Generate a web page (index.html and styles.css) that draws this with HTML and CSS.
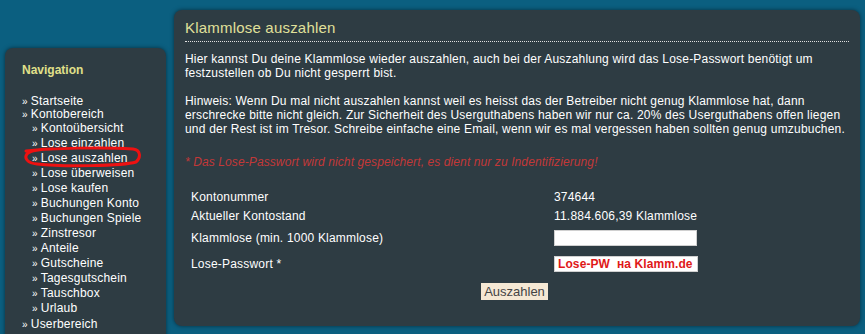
FILE: index.html
```html
<!DOCTYPE html>
<html lang="de">
<head>
  <meta charset="UTF-8" />
  <title>Klammlose auszahlen</title>
  <link rel="stylesheet" href="styles.css">
</head>
<body>
  <div class="page">
    <div class="sidebar">
      <div class="nav-box">
        <h3>Navigation</h3>
        <ul class="nav">
          <li>Startseite</li>
          <li>Kontobereich
            <ul class="subnav">
              <li>Kontoübersicht</li>
              <li>Lose einzahlen</li>
              <li class="current">Lose auszahlen
                <svg class="marker" width="120" height="22" viewBox="0 0 120 22">
                  <path d="M3 5 C30 2, 80 1, 110 3 C118 4, 118 12, 113 16 C100 20, 40 21, 14 18 C4 17, 1 12, 4 8 C8 4, 20 3, 30 3" fill="none" stroke="#ee1111" stroke-width="3" stroke-linecap="round"/>
                </svg>
              </li>
              <li>Lose überweisen</li>
              <li>Lose kaufen</li>
              <li>Buchungen Konto</li>
              <li>Buchungen Spiele</li>
              <li>Zinstresor</li>
              <li>Anteile</li>
              <li>Gutscheine</li>
              <li>Tagesgutschein</li>
              <li>Tauschbox</li>
              <li>Urlaub</li>
            </ul>
          </li>
          <li class="last">Userbereich</li>
        </ul>
      </div>
    </div>

    <div class="main">
      <h2 class="title">Klammlose auszahlen</h2>
      <p>Hier kannst Du deine Klammlose wieder auszahlen, auch bei der Auszahlung wird das Lose-Passwort benötigt um festzustellen ob Du nicht gesperrt bist.</p>
      <p class="hint">Hinweis: Wenn Du mal nicht auszahlen kannst weil es heisst das der Betreiber nicht genug Klammlose hat, dann erschrecke bitte nicht gleich. Zur Sicherheit des Userguthabens haben wir nur ca. 20% des Userguthabens offen liegen und der Rest ist im Tresor. Schreibe einfache eine Email, wenn wir es mal vergessen haben sollten genug umzubuchen.</p>
      <p class="warn">* Das Lose-Passwort wird nicht gespeichert, es dient nur zu Indentifizierung!</p>

      <table class="form">
        <tr class="row-plain">
          <td class="label">Kontonummer</td>
          <td>374644</td>
        </tr>
        <tr class="row-plain">
          <td class="label">Aktueller Kontostand</td>
          <td>11.884.606,39 Klammlose</td>
        </tr>
        <tr class="row-input">
          <td class="label">Klammlose (min. 1000 Klammlose)</td>
          <td><input type="text" class="field"></td>
        </tr>
        <tr class="row-input">
          <td class="label">Lose-Passwort *</td>
          <td><input type="text" class="field pw" value="Lose-PW  на Klamm.de"></td>
        </tr>
        <tr>
          <td colspan="2" class="submit"><button class="btn">Auszahlen</button></td>
        </tr>
      </table>
    </div>
  </div>
</body>
</html>
```

FILE: styles.css
```css
body {
  margin: 0;
  background-color: #0b5f80;
  font-family: "Liberation Sans", Arial, sans-serif;
  font-size: 12px;
  letter-spacing: 0.2px;
  color: #fff;
  height: 334px;
  overflow: hidden;
}

.page {
  display: flex;
  align-items: flex-start;
  gap: 8px;
  padding: 10px 5px 0 5px;
}

.sidebar {
  width: 161px;
  padding-top: 38px;
  flex-shrink: 0;
}

.nav-box {
  background-color: #2e3c43;
  border-radius: 8px;
  box-shadow: 0 0 4px rgba(0, 0, 0, 0.5);
  padding: 15px 10px 40px 17px;
}

.nav-box h3 {
  margin: 0 0 18px;
  font-size: 12px;
  color: #e0e08a;
  font-weight: bold;
  letter-spacing: 0;
}

.nav,
.subnav {
  list-style: none;
  margin: 0;
  padding: 0;
}

.nav > li {
  line-height: 13px;
}

.subnav li {
  line-height: 15px;
}

.nav > li.last {
  padding-top: 2px;
}

.nav li::before {
  content: "\00bb";
  font-size: 10px;
  margin-right: 3px;
}

.subnav {
  padding-left: 10px;
}

.current {
  position: relative;
}

.marker {
  position: absolute;
  left: -9px;
  top: -5px;
}

.main {
  flex: 1;
  background-color: #2e3c43;
  border-radius: 8px;
  box-shadow: 0 0 4px rgba(0, 0, 0, 0.5);
  padding: 9px 11px 26px 11px;
}

.title {
  margin: 0 0 10px;
  font-size: 15px;
  font-weight: normal;
  color: #e0e09a;
  padding-bottom: 4px;
  border-bottom: 1px dotted #e0e0e0;
  line-height: 18px;
}

.main p {
  margin: 0 0 14px;
  line-height: 14px;
}

.main p.hint {
  margin-bottom: 19px;
}

.main p.warn {
  font-style: italic;
  color: #c23838;
  margin-bottom: 18px;
  letter-spacing: 0.1px;
}

.form {
  border-collapse: collapse;
  margin-left: 2px;
}

.form td {
  padding: 0 4px;
  vertical-align: middle;
}

.form .label {
  width: 355px;
}

.row-plain td {
  height: 19px;
}

.row-input td {
  height: 26px;
}

.field {
  width: 137px;
  height: 14px;
  border: 1px solid #d0d0d0;
  padding: 0 2px;
  font-family: "Liberation Sans", Arial, sans-serif;
  font-size: 12px;
  background-color: #fff;
}

.field.pw {
  color: #e01818;
  font-weight: bold;
  letter-spacing: 0.1px;
  padding-left: 3px;
}

.submit {
  text-align: center;
  padding-top: 6px !important;
}

.btn {
  font-family: "Liberation Sans", Arial, sans-serif;
  font-size: 13px;
  background-color: #f5e8d4;
  color: #444;
  border: none;
  padding: 1px 3px;
  margin-left: 140px;
}
```
